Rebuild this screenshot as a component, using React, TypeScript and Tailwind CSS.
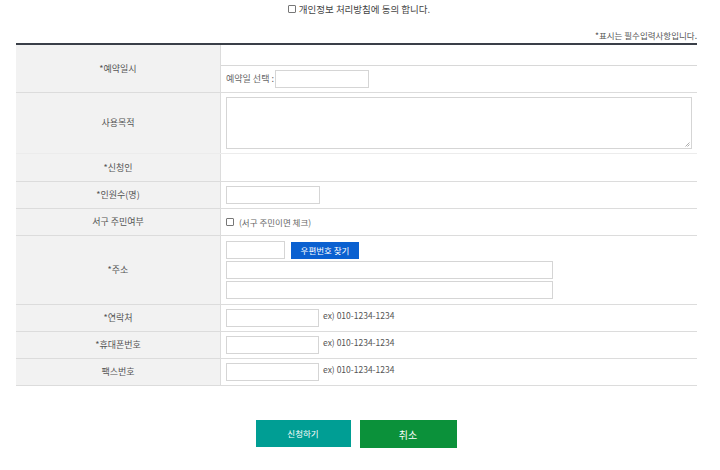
const font = { fontFamily: '"Noto Sans CJK KR", "Noto Sans", sans-serif' }

function Row({ label, height, children }: { label: string; height: string; children?: React.ReactNode }) {
  return (
    <div className={`flex border-b border-[#dcdcdc] ${height}`}>
      <div className="w-[205px] shrink-0 bg-[#f2f2f2] border-r border-[#dcdcdc] flex items-center justify-center text-[9px] text-[#555]">
        {label}
      </div>
      <div className="flex-1 flex flex-col justify-center px-[5px]">{children}</div>
    </div>
  )
}

function Input({ w }: { w: string }) {
  return <div className={`${w} h-[18px] border border-[#d5d5d5] bg-white`} />
}

function Phone({ label }: { label: string }) {
  return (
    <Row label={label} height="h-[27px]">
      <div className="flex items-center gap-[4px]">
        <Input w="w-[93px]" />
        <span className="text-[8.5px] text-[#555] -mt-[5px]">ex) 010-1234-1234</span>
      </div>
    </Row>
  )
}

export default function App() {
  return (
    <div className="w-[720px] h-[470px] bg-white text-[#555]" style={font}>
      {/* agree */}
      <div className="flex items-center justify-center pt-[2px] h-[16px] gap-[3px] pr-[2px]">
        <span className="w-[8px] h-[8px] border border-[#777] rounded-[1px]" />
        <span className="text-[9.5px] text-[#444]">개인정보 처리방침에 동의 합니다.</span>
      </div>

      <div className="mx-[16px] w-[681px]">
        <div className="flex justify-end pt-[15px] pb-[1px] text-[8.5px] text-[#555] h-[27px] items-end">
          *표시는 필수입력사항입니다.
        </div>
        <div className="border-t-[2px] border-[#3a3f48]">
          {/* 예약일시 */}
          <div className="flex border-b border-[#dcdcdc] h-[48px]">
            <div className="w-[205px] shrink-0 bg-[#f2f2f2] border-r border-[#dcdcdc] flex items-center justify-center text-[9px] text-[#555]">
              *예약일시
            </div>
            <div className="flex-1 flex flex-col">
              <div className="h-[21px] border-b border-[#d8d8d8]" />
              <div className="flex-1 flex items-center px-[5px] gap-[1px]">
                <span className="text-[9px] text-[#666]">예약일 선택 :</span>
                <Input w="w-[94px]" />
              </div>
            </div>
          </div>
          {/* 사용목적 */}
          <div className="flex border-b border-[#ececec] h-[61px]">
            <div className="w-[205px] shrink-0 bg-[#f2f2f2] border-r border-[#dcdcdc] flex items-center justify-center text-[9px] text-[#555]">
              사용목적
            </div>
            <div className="flex-1 pl-[5px] pr-[5px] pt-[4px]">
              <div className="relative w-[466px] h-[52px] border border-[#d5d5d5]">
                <svg className="absolute right-[1px] bottom-[1px]" width="5" height="5" viewBox="0 0 5 5">
                  <path d="M4.5 0.5L0.5 4.5M4.5 2.5L2.5 4.5" stroke="#999" strokeWidth="0.8" />
                </svg>
              </div>
            </div>
          </div>
          <Row label="*신청인" height="h-[28px]" />
          <Row label="*인원수(명)" height="h-[27px]">
            <Input w="w-[94px]" />
          </Row>
          <Row label="서구 주민여부" height="h-[27px]">
            <div className="flex items-center gap-[5px]">
              <span className="w-[8px] h-[8px] border border-[#777] rounded-[1px]" />
              <span className="text-[8.5px] text-[#666]">(서구 주민이면 체크)</span>
            </div>
          </Row>
          <Row label="*주소" height="h-[69px]">
            <div className="flex flex-col gap-[2px]">
              <div className="flex items-center gap-[6px]">
                <Input w="w-[59px]" />
                <div className="w-[68px] h-[17px] bg-[#0a60d0] text-white text-[8.5px] flex items-center justify-center">
                  우편번호 찾기
                </div>
              </div>
              <Input w="w-[327px]" />
              <Input w="w-[327px]" />
            </div>
          </Row>
          <Phone label="*연락처" />
          <Phone label="*휴대폰번호" />
          <Phone label="팩스번호" />
        </div>
      </div>

      <div className="flex justify-center gap-[9px] mt-[34px] pr-[8px]">
        <div className="w-[95px] h-[27px] bg-[#009e94] text-white text-[8.5px] flex items-center justify-center">
          신청하기
        </div>
        <div className="w-[97px] h-[28px] bg-[#0b913a] text-white text-[10px] flex items-center justify-center">
          취소
        </div>
      </div>
    </div>
  )
}
